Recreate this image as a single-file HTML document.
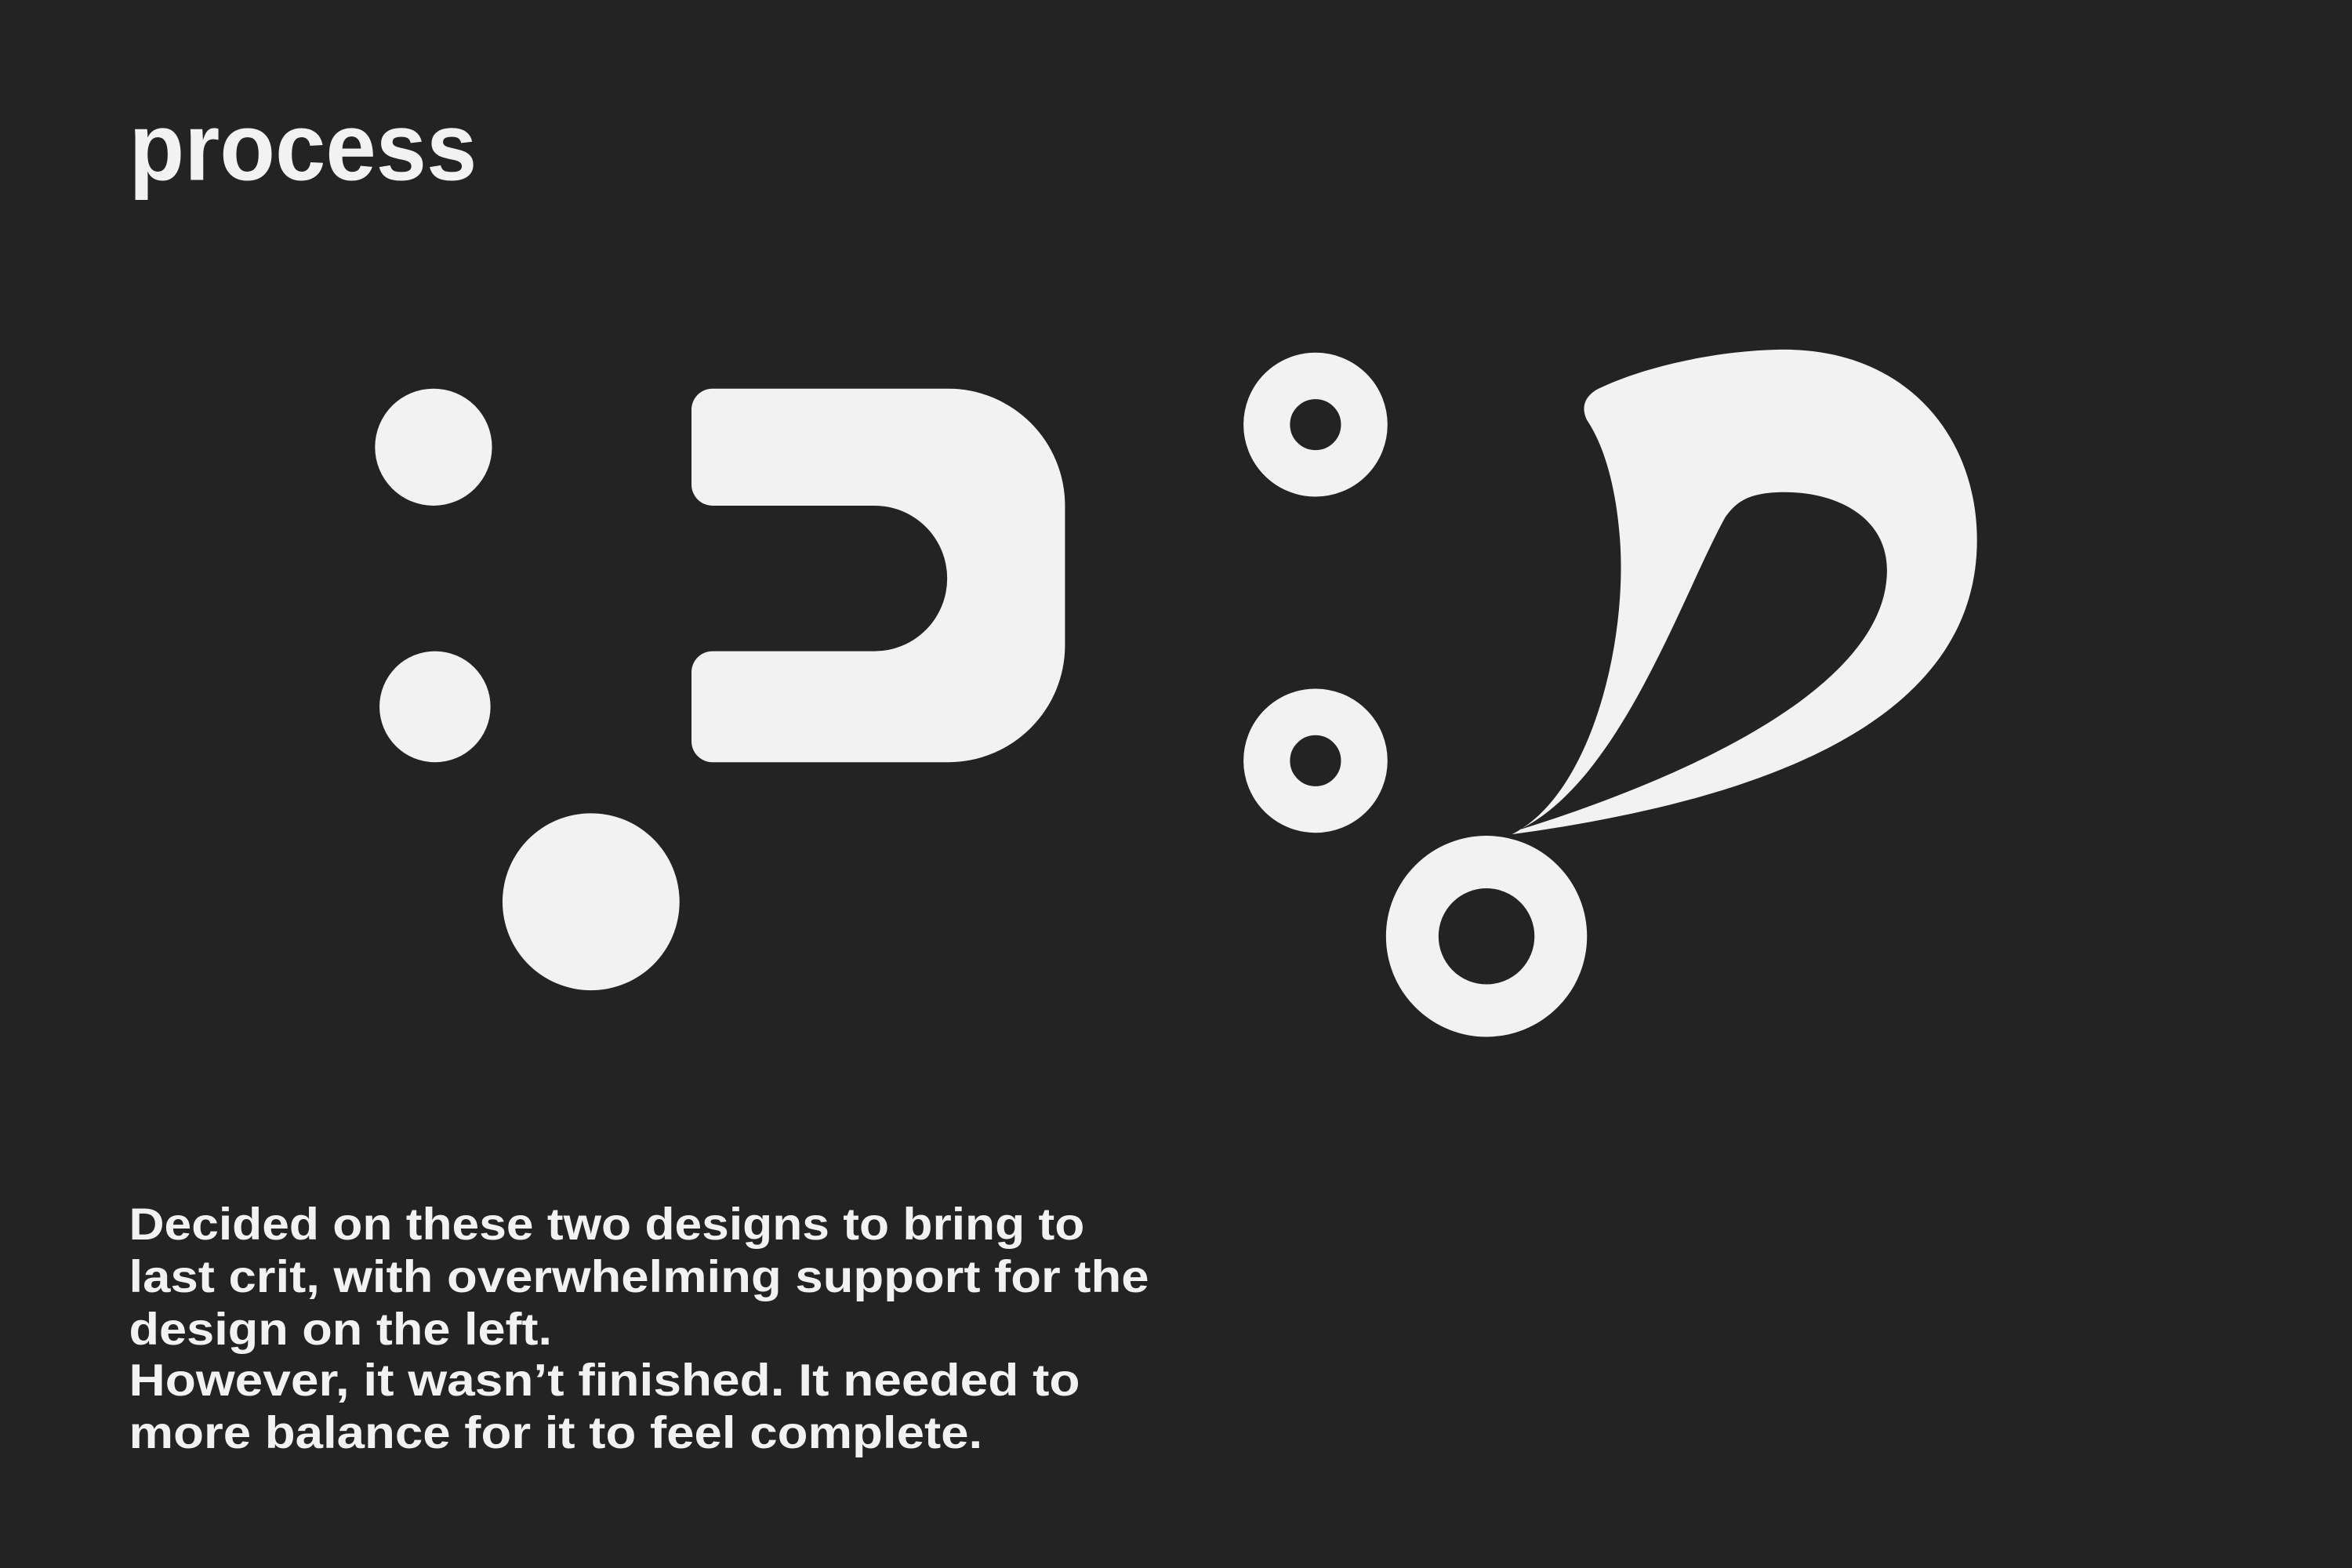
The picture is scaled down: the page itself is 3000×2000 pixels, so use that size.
<!DOCTYPE html>
<html><head><meta charset="utf-8"><style>
html,body{margin:0;padding:0;background:#232323;}
svg{display:block;}
text{font-family:"Liberation Sans",sans-serif;font-weight:bold;fill:#f2f2f2;}
</style></head><body>
<svg width="3000" height="2000" viewBox="0 0 1568 1045" preserveAspectRatio="none" xmlns="http://www.w3.org/2000/svg">
<rect width="1568" height="1045" fill="#232323"/>
<text x="86" y="120" font-size="64" textLength="232" lengthAdjust="spacingAndGlyphs">process</text>
<g fill="#f2f2f2">
<circle cx="289" cy="298" r="39"/>
<circle cx="290" cy="471" r="37"/>
<circle cx="394" cy="601" r="59"/>
<path d="M475,259 H632 A78,78 0 0 1 710,337 V430 A78,78 0 0 1 632,508 H475 A14,14 0 0 1 461,494 V448 A14,14 0 0 1 475,434 H583 A48.5,48.5 0 0 0 583,337 H475 A14,14 0 0 1 461,323 V273 A14,14 0 0 1 475,259 Z"/>
<path fill-rule="evenodd" d="M1008,556 C1060,530 1085,430 1080,360 C1077,320 1068,295 1058,280 C1053,270 1058,262 1068,258 C1100,243 1150,233 1190,233 C1270,233 1318,290 1318,360 C1318,470 1200,530 1008,556 Z M1013,553 C1150,510 1258,450 1258,380 C1258,345 1225,328 1190,328 C1165,328 1157,335 1150,345 C1120,400 1080,520 1013,553 Z"/>
</g>
<g fill="none" stroke="#f2f2f2">
<circle cx="877" cy="283" r="32.5" stroke-width="31"/>
<circle cx="877" cy="507" r="32.5" stroke-width="31"/>
<circle cx="991" cy="624" r="49.5" stroke-width="35"/>
</g>
<g font-size="30">
<text x="86" y="826" textLength="637" lengthAdjust="spacingAndGlyphs">Decided on these two designs to bring to</text>
<text x="86" y="861" textLength="680" lengthAdjust="spacingAndGlyphs">last crit, with overwhelming support for the</text>
<text x="86" y="896" textLength="282" lengthAdjust="spacingAndGlyphs">design on the left.</text>
<text x="86" y="930" textLength="634" lengthAdjust="spacingAndGlyphs">However, it wasn’t finished. It needed to</text>
<text x="86" y="965" textLength="569" lengthAdjust="spacingAndGlyphs">more balance for it to feel complete.</text>
</g>
</svg>
</body></html>
